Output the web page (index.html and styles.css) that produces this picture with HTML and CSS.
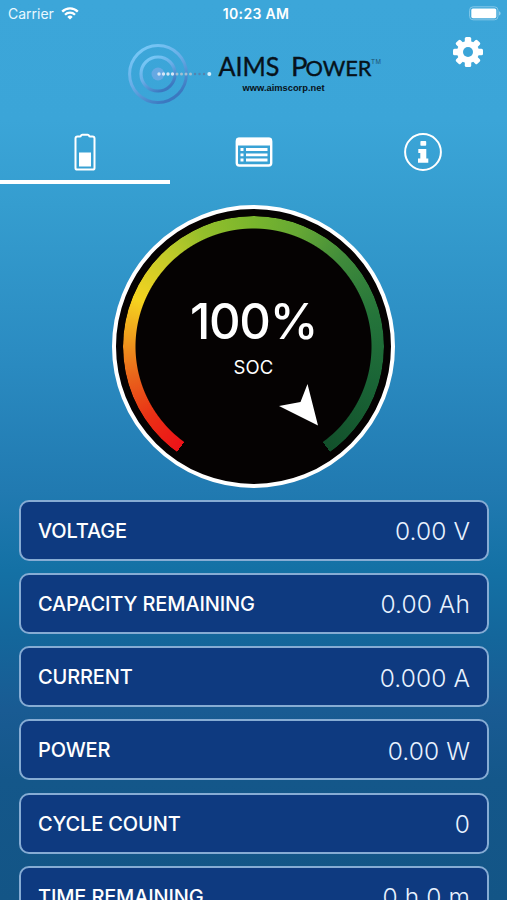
FILE: index.html
```html
<!DOCTYPE html>
<html lang="en">
<head>
  <meta charset="UTF-8">
  <meta name="viewport" content="width=device-width, initial-scale=1.0">
  <title>AIMS Power</title>
  <link rel="stylesheet" href="styles.css">
</head>
<body>
  <!-- Status Bar -->
  <div class="status-bar">
    <div class="carrier">
      <span>Carrier</span>
      <svg width="18" height="13" viewBox="0 0 18 13" fill="none" stroke="#fff" stroke-width="2.3">
        <path d="M1.2 4.6a11 11 0 0 1 15.6 0"/>
        <path d="M4 7.8a7 7 0 0 1 10 0"/>
        <path d="M9 12.6L6.3 9.9a3.8 3.8 0 0 1 5.4 0z" fill="#fff" stroke="none"/>
      </svg>
    </div>
    <div class="time">10:23 AM</div>
    <svg class="battery" width="32" height="15" viewBox="0 0 32 15">
      <rect x=".6" y=".8" width="28.4" height="13" rx="3.5" fill="none" stroke="#85c8e8" stroke-width="1"/>
      <rect x="2.3" y="2.4" width="25" height="9.8" rx="1.6" fill="#fff"/>
      <path d="M30.2 5.3v4.2q1.3-.6 1.3-2.1t-1.3-2.1z" fill="#a5d6ed"/>
    </svg>
  </div>

  <!-- Logo + Settings -->
  <header>
    <svg class="logo" width="264" height="70" viewBox="0 0 264 70">
      <defs>
        <linearGradient id="ring" x1="0" y1="0" x2=".6" y2="1">
          <stop offset="0" stop-color="#7bd0fb"/>
          <stop offset=".55" stop-color="#68ace6"/>
          <stop offset="1" stop-color="#3b78c0"/>
        </linearGradient>
      </defs>
      <g fill="none" stroke="url(#ring)">
        <circle cx="38" cy="37" r="28.4" stroke-width="3"/>
        <circle cx="38" cy="37" r="17" stroke-width="3.2"/>
      </g>
      <circle cx="38" cy="37" r="6.5" fill="#66a8e3"/>
      <g fill="none" stroke-linecap="round" stroke-dasharray="0 4.5">
        <path d="M39 37h16" stroke="#d5e6f6" stroke-width="3.4"/>
        <path d="M57 37h15" stroke="#a3bfd2" stroke-width="3"/>
        <path d="M75 37h12" stroke="#5583ae" stroke-width="2.4"/>
      </g>
      <circle cx="89.3" cy="37" r="2" fill="#d5f0ff"/>
      <g class="logo-name">
        <text x="98.500" y="39" font-size="27.5" textLength="61" lengthAdjust="spacingAndGlyphs">AIMS</text>
        <text x="171" y="39" font-size="27.5">P</text>
        <text x="185.5" y="39" font-size="21" textLength="66" lengthAdjust="spacingAndGlyphs">OWER</text>
      </g>
      <text class="logo-tm" x="251" y="27" textLength="10">TM</text>
      <text class="logo-url" x="122.5" y="53.5" textLength="82" lengthAdjust="spacingAndGlyphs">www.aimscorp.net</text>
    </svg>
    <svg class="settings" width="30" height="30" viewBox="-15 -15 30 30">
      <g fill="#fff">
        <rect x="-3.2" y="-15" width="6.4" height="30" rx="1.5"/>
        <rect x="-3.2" y="-15" width="6.4" height="30" rx="1.5" transform="rotate(45)"/>
        <rect x="-3.2" y="-15" width="6.4" height="30" rx="1.5" transform="rotate(90)"/>
        <rect x="-3.2" y="-15" width="6.4" height="30" rx="1.5" transform="rotate(135)"/>
        <circle r="11"/>
      </g>
      <circle r="5" fill="#3ba5d8"/>
    </svg>
  </header>

  <!-- Tabs -->
  <nav class="tabs">
    <a class="tab active">
      <svg width="24" height="40" viewBox="0 0 24 40">
        <path d="M4.5 4.6h2.2q1 0 1.3-1 .3-.9 1.300-.9h5.400q1 0 1.300.9.300 1 1.300 1h2.200q2 0 2 2v29.300q0 1.700-1.700 1.700H4.200q-1.700 0-1.700-1.700V6.600q0-2 2-2z" fill="none" stroke="#fff" stroke-width="2"/>
        <rect x="6" y="20.500" width="12" height="14" fill="#fff"/>
      </svg>
    </a>
    <a class="tab">
      <svg width="38" height="40" viewBox="0 0 38 40">
        <rect x="1.8" y="7" width="34.4" height="26.5" rx="2.5" fill="none" stroke="#fff" stroke-width="2.4"/>
        <path d="M1 13.500V8q0-2.500 2.500-2.500h31q2.500 0 2.500 2.500v5.500z" fill="#fff"/>
        <path d="M5.500 17.500h3m2.500 0h21.500M5.500 22.800h3m2.500 0h21.500M5.500 28h3m2.500 0h21.500" stroke="#fff" stroke-width="2.800"/>
      </svg>
    </a>
    <a class="tab">
      <svg width="40" height="40" viewBox="0 0 40 40">
        <circle cx="20" cy="20" r="17.9" fill="none" stroke="#fff" stroke-width="2"/>
        <rect x="17.4" y="9" width="5.8" height="4.800" rx=".8" fill="#fff"/>
        <path d="M15.300 17h8v9.500h2v4.200H15v-4.200h2.300v-5.500h-2z" fill="#fff"/>
      </svg>
    </a>
  </nav>

  <!-- State of charge gauge -->
  <div class="gauge">
    <div class="gauge-arc"></div>
    <div class="gauge-value">100%</div>
    <div class="gauge-label">SOC</div>
    <svg class="needle" width="40" height="42" viewBox="0 0 40 42">
      <path d="M28.500 0L39 41.500L0 22L21.500 18z" fill="#fff"/>
    </svg>
  </div>

  <!-- Readings -->
  <main class="readings">
    <div class="reading"><span class="name">VOLTAGE</span><span class="value">0.00 V</span></div>
    <div class="reading"><span class="name">CAPACITY REMAINING</span><span class="value">0.00 Ah</span></div>
    <div class="reading"><span class="name">CURRENT</span><span class="value">0.000 A</span></div>
    <div class="reading"><span class="name">POWER</span><span class="value">0.00 W</span></div>
    <div class="reading"><span class="name">CYCLE COUNT</span><span class="value">0</span></div>
    <div class="reading"><span class="name">TIME REMAINING</span><span class="value">0 h 0 m</span></div>
  </main>
</body>
</html>
```
FILE: styles.css
```css
* {
  box-sizing: border-box;
}
body {
  margin: 0;
  height: 900px;
  overflow: hidden;
  font-family: Inter, "Liberation Sans", sans-serif;
  color: #fff;
  background: linear-gradient(#3ca6d9 0, #3ba5d8 120px, #359dcf 205px, #2b8cc2 350px, #217ab1 490px, #1471a5 570px, #14669b 640px, #195b93 710px, #14578a 780px, #135586 900px);
}
svg {
  display: block;
}

/* Status Bar */
.status-bar {
  display: grid;
  grid-template-columns: 1fr auto 1fr;
  align-items: center;
  height: 27px;
  padding: 0 6px 0 8px;
  font-size: 14px;
}
.carrier {
  display: flex;
  align-items: center;
  gap: 7px;
  color: #e9f8ff;
}
.time {
  padding-left: 3px;
  font-weight: 600;
  font-size: 14px;
  letter-spacing: 0.3px;
}
.battery {
  justify-self: end;
}

/* Header */
header {
  display: flex;
  justify-content: space-between;
  align-items: flex-start;
  height: 93px;
  padding: 10px 24px 0 120px;
}
.logo-name {
  font-family: Lato, sans-serif;
  fill: #07121a;
  stroke: #07121a;
  stroke-width: 0.4px;
}
.logo-tm {
  font: 6.5px "Liberation Sans", sans-serif;
  fill: #1d5170;
}
.logo-url {
  font: bold 9px "Liberation Sans", sans-serif;
  fill: #07121a;
}

/* Tabs */
.tabs {
  display: grid;
  grid-template-columns: 170px 1fr 1fr;
  height: 64px;
}
.tab {
  display: flex;
  justify-content: center;
  padding-top: 12px;
  border-bottom: 4px solid transparent;
}
.tab.active {
  border-bottom-color: #fff;
}

/* Gauge */
.gauge {
  position: relative;
  display: flex;
  flex-direction: column;
  align-items: center;
  width: 283px;
  height: 283px;
  margin: 20.5px auto 0;
  border: 4px solid #fff;
  border-radius: 50%;
  background: #050202;
}
.gauge-arc {
  position: absolute;
  inset: 7px;
  border-radius: 50%;
  background: conic-gradient(from 216deg, #ed1218 0deg, #ea3015 20deg, #e9641b 40deg, #ef9a1d 57deg, #f5d31f 76deg, #c3cb29 100deg, #94bf2b 120deg, #78b52d 145deg, #66a834 165deg, #3f8a3b 190deg, #24743a 220deg, #1a6536 250deg, #12502b 288deg, transparent 288deg);
  -webkit-mask: radial-gradient(circle closest-side, transparent 117.5px, #000 118.5px);
  mask: radial-gradient(circle closest-side, transparent 117.5px, #000 118.5px);
}
.gauge-value {
  margin-top: 83.5px;
  font-size: 49px;
  line-height: 60px;
  font-weight: 500;
  letter-spacing: -1.3px;
}
.gauge-label {
  margin-top: 3px;
  font-size: 18.5px;
  line-height: 24px;
  letter-spacing: 0.2px;
}
.needle {
  position: absolute;
  left: 163px;
  top: 175px;
}

/* Readings */
.readings {
  display: flex;
  flex-direction: column;
  gap: 12.3px;
  padding: 12px 18px 0 19px;
}
.reading {
  display: flex;
  flex-shrink: 0;
  justify-content: space-between;
  align-items: center;
  height: 61px;
  padding: 1px 17px 0;
  border: 2px solid #86acd4;
  border-radius: 10px;
  background: #0e3a80;
}
.name {
  font-size: 20px;
  font-weight: 500;
  letter-spacing: -0.15px;
}
.value {
  padding-top: 1px;
  font-size: 24.5px;
  font-weight: 300;
  letter-spacing: 0.1px;
  color: #e8f2ff;
}
```
